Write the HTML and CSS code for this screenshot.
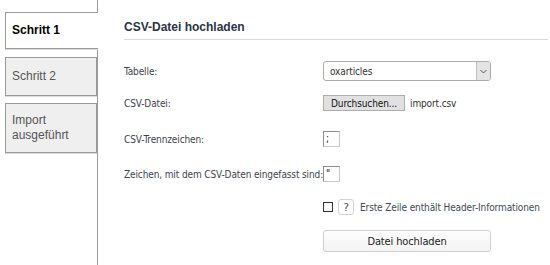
FILE: index.html
```html
<!DOCTYPE html>
<html lang="de">
<head>
<meta charset="utf-8">
<title>CSV-Datei hochladen</title>
<link rel="stylesheet" href="styles.css">
</head>
<body>
<div class="page">
  <nav class="steps">
    <div class="tab active">Schritt 1</div>
    <div class="tab">Schritt 2</div>
    <div class="tab tall">Import<br>ausgeführt</div>
  </nav>
  <main class="content">
    <h1 class="title">CSV-Datei hochladen</h1>
    <form class="form">
      <label class="lbl">Tabelle:</label>
      <div class="field">
        <div class="select">
          <span class="select-val">oxarticles</span>
          <span class="select-btn">
            <svg width="7" height="5" viewBox="0 0 7 5"><path d="M0.5 1 L3.5 4 L6.5 1" fill="none" stroke="#555" stroke-width="1"/></svg>
          </span>
        </div>
      </div>

      <label class="lbl">CSV-Datei:</label>
      <div class="field">
        <span class="browse">Durchsuchen...</span>
        <span class="fname">import.csv</span>
      </div>

      <label class="lbl">CSV-Trennzeichen:</label>
      <div class="field"><span class="tiny">;</span></div>

      <label class="lbl">Zeichen, mit dem CSV-Daten eingefasst sind:</label>
      <div class="field"><span class="tiny">"</span></div>

      <span></span>
      <div class="field">
        <span class="check"></span>
        <span class="help">?</span>
        <span class="check-lbl">Erste Zeile enthält Header-Informationen</span>
      </div>

      <span></span>
      <div class="field">
        <span class="submit">Datei hochladen</span>
      </div>
    </form>
  </main>
</div>
</body>
</html>
```
FILE: styles.css
```css
html, body {
  margin: 0;
  padding: 0;
  background: #fff;
}
.page {
  display: flex;
  width: 550px;
  height: 265px;
  font-family: "Liberation Sans", Arial, sans-serif;
}
.steps {
  width: 92px;
  padding: 12px 0 0 5px;
  border-right: 1px solid #9a9a9a;
  display: flex;
  flex-direction: column;
  gap: 8px;
  flex-shrink: 0;
}
.tab {
  height: 37px;
  box-sizing: border-box;
  border: 1px solid #9a9a9a;
  box-shadow: 0 1px 0 #dcdcdc;
  background: #efefef;
  color: #555;
  font-size: 12px;
  line-height: 15px;
  padding: 0 6px;
  display: flex;
  align-items: center;
}
.tab + .tab { height: 39px; }
.tab.tall { height: 50px; margin-top: -1px; }
.tab.active {
  background: #fff;
  color: #000;
  font-weight: bold;
  border-right: none;
  margin-right: -1px;
}
.content {
  flex: 1;
  padding: 0 2px 0 26px;
}
.title {
  margin: 0;
  padding: 20px 0 5px;
  font-size: 12px;
  line-height: 14px;
  font-weight: bold;
  color: #2a3545;
  border-bottom: 1px solid #dadada;
}
.form {
  margin-top: 15px;
  display: grid;
  grid-template-columns: 199px 1fr;
  grid-template-rows: 32px 32px 40px 30px 36px 32px;
  font-family: "DejaVu Sans Condensed", "DejaVu Sans", sans-serif;
  font-size: 10px;
  letter-spacing: -0.12px;
  color: #3c4350;
}
.lbl, .field {
  display: flex;
  align-items: center;
  white-space: nowrap;
}
.select {
  width: 168px;
  height: 20px;
  box-sizing: border-box;
  border: 1px solid #ababab;
  border-radius: 3px;
  display: flex;
  align-items: center;
  justify-content: space-between;
  padding: 0 0 0 6px;
}
.select-val { color: #333; }
.select-btn {
  width: 14px;
  height: 18px;
  background: #e4e4e4;
  border-left: 1px solid #bdbdbd;
  border-radius: 0 2px 2px 0;
  box-sizing: border-box;
  display: flex;
  align-items: center;
  justify-content: center;
}
.browse {
  width: 82px;
  height: 16px;
  box-sizing: border-box;
  background: #e1e1e1;
  border: 1px solid #adadad;
  color: #111;
  display: flex;
  align-items: center;
  justify-content: center;
}
.fname { margin-left: 5px; color: #333; }
.tiny {
  width: 17px;
  height: 16px;
  box-sizing: border-box;
  border: 1px solid #8c8c8c;
  border-right-color: #c8c8c8;
  border-bottom-color: #c8c8c8;
  color: #111;
  padding-left: 2px;
  line-height: 14px;
}
.check {
  width: 10px;
  height: 10px;
  box-sizing: border-box;
  border: 1px solid #333;
  background: #fff;
}
.help {
  width: 16px;
  height: 16px;
  box-sizing: border-box;
  margin-left: 5px;
  border: 1px solid #d2d2d2;
  border-radius: 3px;
  color: #555;
  font-family: "DejaVu Sans", sans-serif;
  font-size: 11px;
  display: flex;
  align-items: center;
  justify-content: center;
}
.check-lbl { margin-left: 6px; color: #3d4a5a; }
.submit {
  width: 168px;
  height: 22px;
  box-sizing: border-box;
  border: 1px solid #cfcfcf;
  border-radius: 3px;
  background: linear-gradient(#fdfdfd, #f3f3f3);
  color: #222;
  font-size: 11px;
  display: flex;
  align-items: center;
  justify-content: center;
}
```
